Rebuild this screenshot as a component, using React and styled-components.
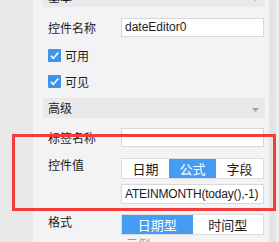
import React from "react";
import styled, { createGlobalStyle } from "styled-components";

const GlobalStyle = createGlobalStyle`
  html, body { margin: 0; padding: 0; background: #f3f3f5; }
  body {
    font-family: "Liberation Sans", "Noto Sans CJK SC", sans-serif;
    font-size: 12px;
    color: #1c1c1c;
  }
`;

const Page = styled.div`
  position: relative;
  display: flex;
  width: 279px;
  height: 242px;
  overflow: hidden;
`;

const LeftRail = styled.div`
  width: 33px;
  flex-shrink: 0;
  background: #e8e8e8;
`;

const Panel = styled.div`
  width: 236px;
  flex-shrink: 0;
  box-sizing: border-box;
  padding: 0 4px 0 10px;
  background: #f3f3f5;
  overflow: hidden;
`;

const Inner = styled.div`
  display: flex;
  flex-direction: column;
  margin-top: -13px;
`;

const RightRail = styled.div`
  flex: 1;
  background: #e5e5e5;
  border-right: 3px solid #eeeeee;
`;

const SectionHeader = styled.div`
  height: 20px;
  margin-top: ${(p) => p.$mt || 0}px;
  display: flex;
  align-items: center;
  justify-content: space-between;
  padding: 0 6px 0 5px;
  background: #e9e9eb;
  font-family: "Noto Sans CJK SC", sans-serif;
  font-size: 12px;
  line-height: 20px;
`;

const Caret = styled.svg`
  margin-top: 4px;
`;

const FieldRow = styled.div`
  display: flex;
  align-items: flex-start;
  padding-left: 5px;
  margin-top: ${(p) => p.$mt || 0}px;
`;

const Label = styled.div`
  width: 73px;
  flex-shrink: 0;
  line-height: 19px;
  margin-top: ${(p) => p.$offset || 0}px;
  font-family: "Noto Sans CJK SC", sans-serif;
  font-size: 12px;
`;

const Control = styled.div`
  width: 143px;
  display: flex;
  flex-direction: column;
  gap: 5px;
`;

const TextBox = styled.div`
  box-sizing: border-box;
  height: ${(p) => p.$h || 19}px;
  padding-left: 3px;
  background: #fff;
  border: 1px solid #d8d8d8;
  font-family: "Liberation Sans", sans-serif;
  font-size: 12px;
  letter-spacing: ${(p) => p.$tight ? "-0.2px" : "0"};
  line-height: ${(p) => (p.$h || 19) - 2}px;
  white-space: nowrap;
  overflow: hidden;
`;

const Segmented = styled.div`
  box-sizing: border-box;
  display: flex;
  height: 21px;
  background: #fff;
  border: 1px solid #dcdcdc;
`;

const Segment = styled.div`
  flex: 1;
  text-align: center;
  line-height: 19px;
  font-family: "Noto Sans CJK SC", sans-serif;
  font-size: 13px;
  background: ${(p) => (p.$active ? "#459df3" : "#fff")};
  color: ${(p) => (p.$active ? "#fff" : "#1c1c1c")};
`;

const CheckRow = styled.div`
  display: flex;
  align-items: center;
  gap: 4px;
  height: 13px;
  padding-left: 5px;
  margin-top: ${(p) => p.$mt || 0}px;
  font-family: "Noto Sans CJK SC", sans-serif;
  font-size: 12px;
`;

const Hint = styled.div`
  margin: 2px 0 0 83px;
  color: #9a9a9a;
  font-family: "Noto Sans CJK SC", sans-serif;
  font-size: 12px;
  line-height: 14px;
`;

const Highlight = styled.div`
  position: absolute;
  left: 12px;
  top: 134px;
  width: 264px;
  height: 77px;
  box-sizing: border-box;
  border: 3px solid #f43c3c;
  pointer-events: none;
`;

const CheckIcon = () => (
  <svg width="13" height="13" viewBox="0 0 13 13">
    <rect width="13" height="13" rx="1" fill="#3d95ea" />
    <polyline
      points="2.8,6.8 5.3,9.4 10.3,3.4"
      fill="none"
      stroke="#fff"
      strokeWidth="1.6"
    />
  </svg>
);

const Arrow = () => (
  <Caret width="7" height="4" viewBox="0 0 7 4">
    <polygon points="0,0 7,0 3.5,4" fill="#a2a2a2" />
  </Caret>
);

export default function App() {
  return (
    <>
      <GlobalStyle />
      <Page>
        <LeftRail />
        <Panel>
          <Inner>
            <SectionHeader>
              <span>基本</span>
              <Arrow />
            </SectionHeader>
            <FieldRow $mt={11}>
              <Label>控件名称</Label>
              <Control>
                <TextBox>dateEditor0</TextBox>
              </Control>
            </FieldRow>
            <CheckRow $mt={12}>
              <CheckIcon />
              <span>可用</span>
            </CheckRow>
            <CheckRow $mt={13}>
              <CheckIcon />
              <span>可见</span>
            </CheckRow>
            <SectionHeader $mt={10}>
              <span>高级</span>
              <Arrow />
            </SectionHeader>
            <FieldRow $mt={10}>
              <Label>标签名称</Label>
              <Control>
                <TextBox />
              </Control>
            </FieldRow>
            <FieldRow $mt={11}>
              <Label $offset={-3}>控件值</Label>
              <Control>
                <Segmented>
                  <Segment>日期</Segment>
                  <Segment $active>公式</Segment>
                  <Segment>字段</Segment>
                </Segmented>
                <TextBox $h={20} $tight>ATEINMONTH(today(),-1)</TextBox>
              </Control>
            </FieldRow>
            <FieldRow $mt={10}>
              <Label $offset={-2}>格式</Label>
              <Control>
                <Segmented>
                  <Segment $active>日期型</Segment>
                  <Segment>时间型</Segment>
                </Segmented>
              </Control>
            </FieldRow>
            <Hint>示例</Hint>
          </Inner>
        </Panel>
        <RightRail />
        <Highlight />
      </Page>
    </>
  );
}
